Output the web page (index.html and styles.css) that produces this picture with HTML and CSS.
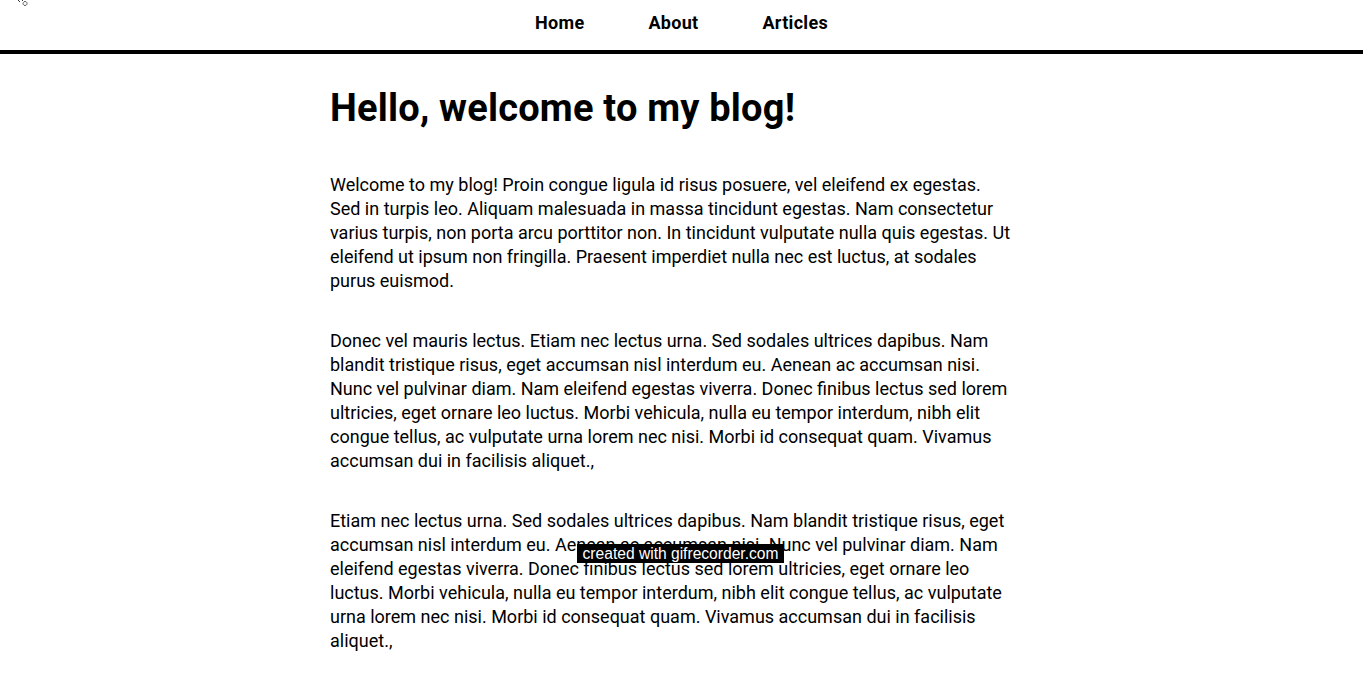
FILE: index.html
```html
<!DOCTYPE html>
<html lang="en">
<head>
<meta charset="utf-8">
<title>My Blog</title>
<link rel="stylesheet" href="styles.css">
</head>
<body>
<svg class="cursor-mark" width="14" height="6" viewBox="0 0 14 6" aria-hidden="true">
  <path d="M1 0 L3 2 M5 0 L6 1" stroke="#333" stroke-width="1" fill="none"/>
  <path d="M8 1.5 a2 2 0 1 0 0.1 0" stroke="#555" stroke-width="1" fill="none"/>
</svg>
<header class="site-header">
  <nav class="nav">
    <a class="nav-link" href="#">Home</a>
    <a class="nav-link" href="#">About</a>
    <a class="nav-link" href="#">Articles</a>
  </nav>
</header>
<main class="content">
  <h1 class="title">Hello, welcome to my blog!</h1>
  <p class="para">Welcome to my blog! Proin congue ligula id risus posuere, vel eleifend ex egestas. Sed in turpis leo. Aliquam malesuada in massa tincidunt egestas. Nam consectetur varius turpis, non porta arcu porttitor non. In tincidunt vulputate nulla quis egestas. Ut eleifend ut ipsum non fringilla. Praesent imperdiet nulla nec est luctus, at sodales purus euismod.</p>
  <p class="para">Donec vel mauris lectus. Etiam nec lectus urna. Sed sodales ultrices dapibus. Nam blandit tristique risus, eget accumsan nisl interdum eu. Aenean ac accumsan nisi. Nunc vel pulvinar diam. Nam eleifend egestas viverra. Donec finibus lectus sed lorem ultricies, eget ornare leo luctus. Morbi vehicula, nulla eu tempor interdum, nibh elit congue tellus, ac vulputate urna lorem nec nisi. Morbi id consequat quam. Vivamus accumsan dui in facilisis aliquet.,</p>
  <p class="para">Etiam nec lectus urna. Sed sodales ultrices dapibus. Nam blandit tristique risus, eget accumsan nisl interdum eu. Aenean ac accumsan nisi. Nunc vel pulvinar diam. Nam eleifend egestas viverra. Donec finibus lectus sed lorem ultricies, eget ornare leo luctus. Morbi vehicula, nulla eu tempor interdum, nibh elit congue tellus, ac vulputate urna lorem nec nisi. Morbi id consequat quam. Vivamus accumsan dui in facilisis aliquet.,</p>
</main>
<div class="watermark">created with gifrecorder.com</div>
</body>
</html>
```
FILE: styles.css
```css
html, body {
  margin: 0;
  padding: 0;
  background: #fff;
  color: #000;
  font-family: Roboto, "Liberation Sans", sans-serif;
  overflow: hidden;
}

.cursor-mark {
  position: absolute;
  left: 17px;
  top: 0;
}

.site-header {
  height: 50px;
  border-bottom: 4px solid #000;
  box-sizing: content-box;
}

.nav {
  display: flex;
  justify-content: center;
  gap: 64px;
  padding-top: 11px;
}

.nav-link {
  font-size: 18px;
  font-weight: 700;
  line-height: 24px;
  letter-spacing: 0.3px;
  color: #000;
  text-decoration: none;
}

.content {
  width: 683px;
  margin: 0 auto;
  padding-right: 20px;
}

.title {
  font-size: 38px;
  font-weight: 700;
  line-height: 44px;
  letter-spacing: 0.2px;
  margin: 32px 0 43px;
}

.para {
  font-size: 18px;
  line-height: 24px;
  margin: 36px 0;
}

.watermark {
  position: absolute;
  left: 577px;
  top: 544px;
  width: 207px;
  height: 19px;
  background: #000;
  color: #fff;
  font-family: "Liberation Sans", Arial, sans-serif;
  font-size: 15.6px;
  line-height: 19px;
  text-align: center;
  white-space: nowrap;
}
```
